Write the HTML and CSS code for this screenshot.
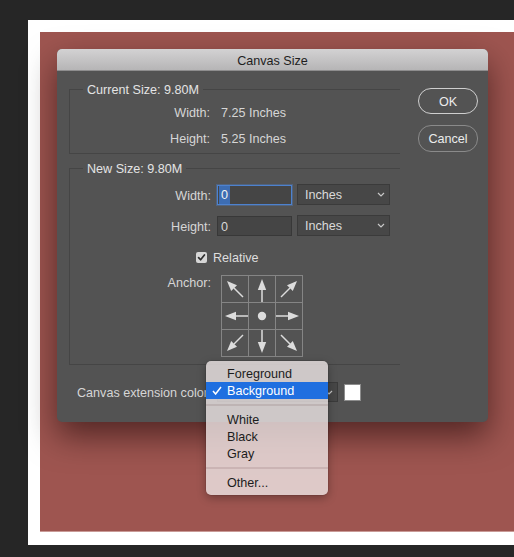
FILE: index.html
```html
<!DOCTYPE html>
<html>
<head>
<meta charset="utf-8">
<link rel="stylesheet" href="styles.css">
</head>
<body>
<div class="frame">
  <div class="canvas">
    <div class="dialog">
      <div class="titlebar">Canvas Size</div>
      <div class="dbody">
        <div class="main">
          <div class="groups">
            <fieldset class="group g1">
              <legend>Current Size: 9.80M</legend>
              <div class="row"><span class="lbl">Width:</span><span class="val">7.25 Inches</span></div>
              <div class="row row-gap"><span class="lbl">Height:</span><span class="val">5.25 Inches</span></div>
            </fieldset>
            <fieldset class="group g2">
              <legend>New Size: 9.80M</legend>
              <div class="row">
                <span class="lbl">Width:</span>
                <div class="ctrls">
                  <div class="input focus"><span class="seltext">0</span></div>
                  <div class="select"><span class="seltxt">Inches</span><svg class="chev" width="8" height="5" viewBox="0 0 8 5"><polyline points="1,1 4,4 7,1" fill="none" stroke="#c8c8c8" stroke-width="1.2"/></svg></div>
                </div>
              </div>
              <div class="row row-gap2">
                <span class="lbl">Height:</span>
                <div class="ctrls">
                  <div class="input"><span class="intext">0</span></div>
                  <div class="select"><span class="seltxt">Inches</span><svg class="chev" width="8" height="5" viewBox="0 0 8 5"><polyline points="1,1 4,4 7,1" fill="none" stroke="#c8c8c8" stroke-width="1.2"/></svg></div>
                </div>
              </div>
              <div class="row row-gap2 check-row">
                <span class="checkbox"><svg width="11" height="11" viewBox="0 0 11 11"><polyline points="2.6,5.6 4.6,7.8 8.4,3" fill="none" stroke="#2e2e2e" stroke-width="1.7" stroke-linecap="round" stroke-linejoin="round"/></svg></span>
                <span class="check-lbl">Relative</span>
              </div>
              <div class="anchor-row">
                <span class="lbl anchor-lbl">Anchor:</span>
                <svg class="anchor" width="82" height="82" viewBox="0 0 82 82">
                  <g fill="none" stroke="#858585" stroke-width="1">
                    <rect x="0.5" y="0.5" width="81" height="81"/>
                    <line x1="27.5" y1="0.5" x2="27.5" y2="81.5"/>
                    <line x1="54.5" y1="0.5" x2="54.5" y2="81.5"/>
                    <line x1="0.5" y1="27.5" x2="81.5" y2="27.5"/>
                    <line x1="0.5" y1="54.5" x2="81.5" y2="54.5"/>
                  </g>
                  <g stroke="#dcdcdc" stroke-width="1.5">
                    <line x1="41" y1="14" x2="41" y2="27"/>
                    <line x1="41" y1="55" x2="41" y2="68"/>
                    <line x1="14" y1="41" x2="27" y2="41"/>
                    <line x1="55" y1="41" x2="68" y2="41"/>
                    <line x1="13" y1="13" x2="22" y2="22"/>
                    <line x1="69" y1="13" x2="60" y2="22"/>
                    <line x1="13" y1="69" x2="22" y2="60"/>
                    <line x1="69" y1="69" x2="60" y2="60"/>
                  </g>
                  <g fill="#dcdcdc">
                    <polygon points="41,4 36.8,15 45.2,15"/>
                    <polygon points="41,78 36.8,67 45.2,67"/>
                    <polygon points="4,41 15,36.8 15,45.2"/>
                    <polygon points="78,41 67,36.8 67,45.2"/>
                    <polygon points="6,6 16,10.2 10.2,16"/>
                    <polygon points="76,6 66,10.2 71.8,16"/>
                    <polygon points="6,76 16,71.8 10.2,66"/>
                    <polygon points="76,76 66,71.8 71.8,66"/>
                    <circle cx="41" cy="41" r="4.2"/>
                  </g>
                </svg>
              </div>
            </fieldset>
          </div>
          <div class="buttons">
            <div class="btn ok">OK</div>
            <div class="btn cancel">Cancel</div>
          </div>
        </div>
        <div class="ext-row">
          <span class="lbl ext-lbl">Canvas extension color:</span>
          <div class="select ext"><span></span><svg class="chev" width="8" height="5" viewBox="0 0 8 5"><polyline points="1,1 4,4 7,1" fill="none" stroke="#c8c8c8" stroke-width="1.2"/></svg></div>
          <span class="swatch"></span>
        </div>
      </div>
    </div>
  </div>
</div>
<div class="popup">
  <div class="item">Foreground</div>
  <div class="item active"><svg class="tick" width="10" height="9" viewBox="0 0 10 9"><polyline points="1,5 3.6,8 9,1" fill="none" stroke="#ffffff" stroke-width="1.5"/></svg>Background</div>
  <div class="sep"></div>
  <div class="item">White</div>
  <div class="item">Black</div>
  <div class="item">Gray</div>
  <div class="sep"></div>
  <div class="item">Other...</div>
</div>
</body>
</html>
```
FILE: styles.css
```css
html, body {
  margin: 0;
  padding: 0;
}
body {
  width: 514px;
  height: 557px;
  overflow: hidden;
  background: #262626;
  font-family: "Liberation Sans", Arial, sans-serif;
  font-size: 12.6px;
  line-height: 15px;
  position: relative;
}
.frame {
  margin: 20px 0 0 28px;
  width: 486px;
  height: 525px;
  box-sizing: border-box;
  padding: 12px 0 0 12px;
  background: #ffffff;
}
.canvas {
  width: 474px;
  height: 500px;
  box-sizing: border-box;
  padding: 17px 0 0 17px;
  background: #9e5550;
  border-bottom: 1px solid #c99a96;
}
.dialog {
  width: 431px;
  height: 373px;
  border-radius: 5px;
  background: #535353;
  box-shadow: 0 14px 32px rgba(20, 0, 0, 0.55);
  overflow: hidden;
}
.titlebar {
  height: 22px;
  padding-top: 2px;
  line-height: 20px;
  text-align: center;
  color: #1e1e1e;
  background: linear-gradient(#d3d2d3, #b6b5b6);
  border-bottom: 1px solid #8e8d8e;
  box-sizing: border-box;
}
.dbody {
  padding: 11px 10px 0 12px;
}
.main {
  display: flex;
  gap: 18px;
}
.groups {
  width: 331px;
}
.group {
  margin: 0;
  min-width: 0;
  box-sizing: border-box;
  width: 331px;
  border: 1px solid #454545;
  border-right: none;
  color: #dadada;
}
.group legend {
  margin-left: 13px;
  padding: 1px 4px 0 4px;
  line-height: 14px;
  color: #e4e4e4;
}
.g1 {
  padding: 5px 0 5px 0;
}
.g2 {
  margin-top: 7px;
  padding: 9px 0 7px 0;
}
.row {
  display: flex;
  align-items: center;
  height: 20px;
}
.row-gap {
  margin-top: 6px;
}
.row-gap2 {
  margin-top: 11px;
}
.lbl {
  width: 140px;
  text-align: right;
  color: #d6d6d6;
  flex: none;
  padding-top: 2px;
}
.g2 .lbl {
  width: 141px;
}
.val {
  margin-left: 11px;
  color: #d6d6d6;
  padding-top: 2px;
}
.ctrls {
  display: flex;
  gap: 5px;
  margin-left: 6px;
}
.input {
  width: 75px;
  height: 20px;
  box-sizing: border-box;
  background: #454545;
  border: 1px solid #383838;
  color: #d8d8d8;
  display: flex;
  align-items: center;
  padding-left: 3px;
}
.intext {
  padding-top: 2px;
}
.input.focus {
  border-color: #4d82cf;
  box-shadow: 0 0 0 1px rgba(77, 130, 207, 0.35);
  padding-left: 1px;
}
.seltext {
  background: #3d6db3;
  color: #f2f2f2;
  padding: 2px 2px 1px 2px;
  line-height: 15px;
}
.select {
  width: 93px;
  height: 21px;
  box-sizing: border-box;
  background: #474747;
  border: 1px solid #3b3b3b;
  color: #dadada;
  display: flex;
  align-items: center;
  justify-content: space-between;
  padding: 0 4px 0 7px;
  margin-top: -1px;
}
.seltxt {
  padding-top: 2px;
}
.chev {
  display: block;
}
.check-row {
  padding-left: 126px;
}
.checkbox {
  width: 11px;
  height: 11px;
  border-radius: 2px;
  background: #d6d6d6;
  display: block;
  flex: none;
}
.checkbox svg {
  display: block;
}
.check-lbl {
  margin-left: 6px;
  color: #dedede;
  padding-top: 2px;
}
.anchor-row {
  display: flex;
  align-items: flex-start;
  margin-top: 8px;
  height: 82px;
}
.anchor-lbl {
  padding-top: 0;
  margin-top: 1px;
}
.anchor {
  display: block;
  margin-left: 10px;
}
.buttons {
  display: flex;
  flex-direction: column;
  gap: 11px;
  margin-top: 6px;
}
.btn {
  width: 60px;
  height: 26px;
  box-sizing: border-box;
  border-radius: 13px;
  border: 1px solid #cfcfcf;
  color: #ececec;
  text-align: center;
  line-height: 24px;
  padding-top: 1px;
}
.btn.cancel {
  height: 27px;
  line-height: 24px;
  border-color: #8a8a8a;
}
.ext-row {
  display: flex;
  align-items: center;
  margin-top: 17px;
  padding-left: 8px;
  height: 20px;
}
.ext-lbl {
  width: 140px;
  text-align: left;
}
.select.ext {
  width: 121px;
  margin-top: 0;
  height: 20px;
}
.swatch {
  width: 17px;
  height: 17px;
  box-sizing: border-box;
  margin-left: 6px;
  background: #ffffff;
  border: 1px solid #8d8d8d;
}
.popup {
  position: absolute;
  left: 206px;
  top: 361px;
  width: 122px;
  padding: 4px 0;
  border-radius: 5px;
  background: rgba(238, 230, 230, 0.8);
  box-shadow: 0 3px 10px rgba(0, 0, 0, 0.3), 0 0 0 0.5px rgba(0, 0, 0, 0.15);
  color: #1c1c1c;
}
.item {
  height: 17px;
  box-sizing: border-box;
  padding-top: 1px;
  line-height: 16px;
  padding-left: 21px;
  position: relative;
}
.item.active {
  background: #1f6fe0;
  color: #ffffff;
}
.tick {
  position: absolute;
  left: 6px;
  top: 4px;
}
.sep {
  height: 12px;
  display: flex;
  align-items: center;
}
.sep::before {
  content: "";
  display: block;
  width: 100%;
  height: 2px;
  background: rgba(120, 90, 90, 0.18);
}
```
